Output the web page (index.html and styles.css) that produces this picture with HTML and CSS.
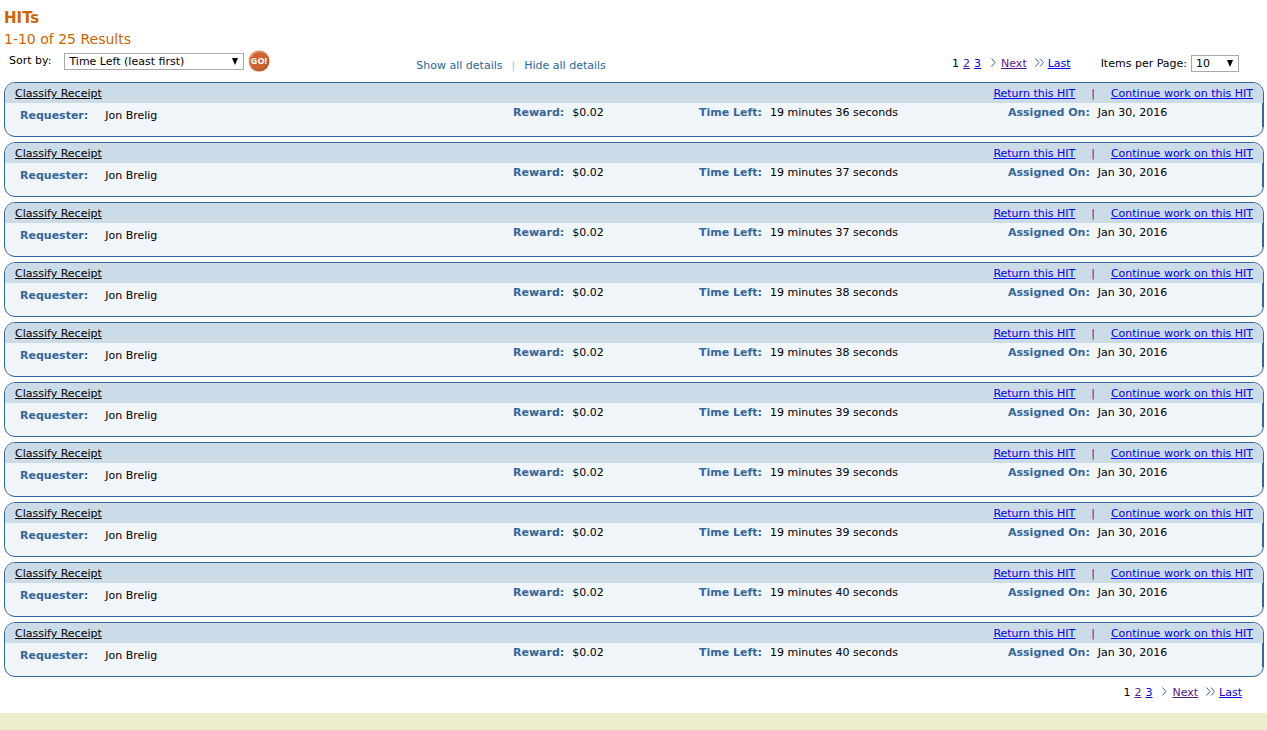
FILE: index.html
```
<!DOCTYPE html>
<html lang="en">
<head>
  <meta charset="utf-8">
  <title>HITs</title>
  <link rel="stylesheet" href="styles.css">
</head>
<body>
  <div class="content">
    <h1 class="title">HITs</h1>
    <h2 class="results">1-10 of 25 Results</h2>

    <div class="toolbar">
      <form class="sort">
        <label for="sort">Sort by:</label>
        <span class="select">
          <select id="sort" class="sort-select">
            <option>Time Left (least first)</option>
            <option>Time Left (most first)</option>
            <option>Reward (most first)</option>
          </select>
        </span>
        <button type="button" class="go" aria-label="GO!">
          <svg width="22" height="22" viewBox="0 0 22 22">
            <defs>
              <linearGradient id="rim" x1="0" y1="0" x2="1" y2="1">
                <stop offset="0" stop-color="#f0b080"/>
                <stop offset="0.5" stop-color="#d06c38"/>
                <stop offset="1" stop-color="#a04c1c"/>
              </linearGradient>
            </defs>
            <circle cx="11" cy="11" r="10.5" fill="url(#rim)"/>
            <circle cx="11" cy="11" r="8.5" fill="#cc6331"/>
            <text x="11" y="14" class="go-text">GO!</text>
          </svg>
        </button>
      </form>
      <div class="details">
        <a href="#">Show all details</a><span class="bar">|</span><a href="#">Hide all details</a>
      </div>
      <div class="paging">
        <div class="pager">
          <span>1</span> <a href="#" class="visited">2</a> <a href="#">3</a>
          <svg class="next" width="5" height="9" viewBox="0 0 5 9"><path d="M0.5 0.5L4 4.5L0.5 8.5"/></svg>
          <a href="#" class="visited">Next</a>
          <svg class="last" width="9" height="9" viewBox="0 0 9 9"><path d="M0.5 0.5L4 4.5L0.5 8.5M5 0.5L8.5 4.5L5 8.5"/></svg>
          <a href="#">Last</a>
        </div>
        <form class="per-page">
          <label for="per-page">Items per Page:</label>
          <span class="select">
            <select id="per-page" class="page-select">
              <option>10</option>
              <option>25</option>
            </select>
          </span>
        </form>
      </div>
    </div>

    <div class="hits">
      <div class="hit">
        <div class="hit-head">
          <a href="#" class="hit-title">Classify Receipt</a>
          <div><a href="#">Return this HIT</a><span class="divider">|</span><a href="#">Continue work on this HIT</a></div>
        </div>
        <dl class="hit-body">
          <div class="requester"><dt>Requester:</dt><dd>Jon Brelig</dd></div>
          <div><dt>Reward:</dt><dd>$0.02</dd></div>
          <div><dt>Time Left:</dt><dd>19 minutes 36 seconds</dd></div>
          <div><dt>Assigned On:</dt><dd>Jan 30, 2016</dd></div>
        </dl>
      </div>

      <div class="hit">
        <div class="hit-head">
          <a href="#" class="hit-title">Classify Receipt</a>
          <div><a href="#">Return this HIT</a><span class="divider">|</span><a href="#">Continue work on this HIT</a></div>
        </div>
        <dl class="hit-body">
          <div class="requester"><dt>Requester:</dt><dd>Jon Brelig</dd></div>
          <div><dt>Reward:</dt><dd>$0.02</dd></div>
          <div><dt>Time Left:</dt><dd>19 minutes 37 seconds</dd></div>
          <div><dt>Assigned On:</dt><dd>Jan 30, 2016</dd></div>
        </dl>
      </div>

      <div class="hit">
        <div class="hit-head">
          <a href="#" class="hit-title">Classify Receipt</a>
          <div><a href="#">Return this HIT</a><span class="divider">|</span><a href="#">Continue work on this HIT</a></div>
        </div>
        <dl class="hit-body">
          <div class="requester"><dt>Requester:</dt><dd>Jon Brelig</dd></div>
          <div><dt>Reward:</dt><dd>$0.02</dd></div>
          <div><dt>Time Left:</dt><dd>19 minutes 37 seconds</dd></div>
          <div><dt>Assigned On:</dt><dd>Jan 30, 2016</dd></div>
        </dl>
      </div>

      <div class="hit">
        <div class="hit-head">
          <a href="#" class="hit-title">Classify Receipt</a>
          <div><a href="#">Return this HIT</a><span class="divider">|</span><a href="#">Continue work on this HIT</a></div>
        </div>
        <dl class="hit-body">
          <div class="requester"><dt>Requester:</dt><dd>Jon Brelig</dd></div>
          <div><dt>Reward:</dt><dd>$0.02</dd></div>
          <div><dt>Time Left:</dt><dd>19 minutes 38 seconds</dd></div>
          <div><dt>Assigned On:</dt><dd>Jan 30, 2016</dd></div>
        </dl>
      </div>

      <div class="hit">
        <div class="hit-head">
          <a href="#" class="hit-title">Classify Receipt</a>
          <div><a href="#">Return this HIT</a><span class="divider">|</span><a href="#">Continue work on this HIT</a></div>
        </div>
        <dl class="hit-body">
          <div class="requester"><dt>Requester:</dt><dd>Jon Brelig</dd></div>
          <div><dt>Reward:</dt><dd>$0.02</dd></div>
          <div><dt>Time Left:</dt><dd>19 minutes 38 seconds</dd></div>
          <div><dt>Assigned On:</dt><dd>Jan 30, 2016</dd></div>
        </dl>
      </div>

      <div class="hit">
        <div class="hit-head">
          <a href="#" class="hit-title">Classify Receipt</a>
          <div><a href="#">Return this HIT</a><span class="divider">|</span><a href="#">Continue work on this HIT</a></div>
        </div>
        <dl class="hit-body">
          <div class="requester"><dt>Requester:</dt><dd>Jon Brelig</dd></div>
          <div><dt>Reward:</dt><dd>$0.02</dd></div>
          <div><dt>Time Left:</dt><dd>19 minutes 39 seconds</dd></div>
          <div><dt>Assigned On:</dt><dd>Jan 30, 2016</dd></div>
        </dl>
      </div>

      <div class="hit">
        <div class="hit-head">
          <a href="#" class="hit-title">Classify Receipt</a>
          <div><a href="#">Return this HIT</a><span class="divider">|</span><a href="#">Continue work on this HIT</a></div>
        </div>
        <dl class="hit-body">
          <div class="requester"><dt>Requester:</dt><dd>Jon Brelig</dd></div>
          <div><dt>Reward:</dt><dd>$0.02</dd></div>
          <div><dt>Time Left:</dt><dd>19 minutes 39 seconds</dd></div>
          <div><dt>Assigned On:</dt><dd>Jan 30, 2016</dd></div>
        </dl>
      </div>

      <div class="hit">
        <div class="hit-head">
          <a href="#" class="hit-title">Classify Receipt</a>
          <div><a href="#">Return this HIT</a><span class="divider">|</span><a href="#">Continue work on this HIT</a></div>
        </div>
        <dl class="hit-body">
          <div class="requester"><dt>Requester:</dt><dd>Jon Brelig</dd></div>
          <div><dt>Reward:</dt><dd>$0.02</dd></div>
          <div><dt>Time Left:</dt><dd>19 minutes 39 seconds</dd></div>
          <div><dt>Assigned On:</dt><dd>Jan 30, 2016</dd></div>
        </dl>
      </div>

      <div class="hit">
        <div class="hit-head">
          <a href="#" class="hit-title">Classify Receipt</a>
          <div><a href="#">Return this HIT</a><span class="divider">|</span><a href="#">Continue work on this HIT</a></div>
        </div>
        <dl class="hit-body">
          <div class="requester"><dt>Requester:</dt><dd>Jon Brelig</dd></div>
          <div><dt>Reward:</dt><dd>$0.02</dd></div>
          <div><dt>Time Left:</dt><dd>19 minutes 40 seconds</dd></div>
          <div><dt>Assigned On:</dt><dd>Jan 30, 2016</dd></div>
        </dl>
      </div>

      <div class="hit">
        <div class="hit-head">
          <a href="#" class="hit-title">Classify Receipt</a>
          <div><a href="#">Return this HIT</a><span class="divider">|</span><a href="#">Continue work on this HIT</a></div>
        </div>
        <dl class="hit-body">
          <div class="requester"><dt>Requester:</dt><dd>Jon Brelig</dd></div>
          <div><dt>Reward:</dt><dd>$0.02</dd></div>
          <div><dt>Time Left:</dt><dd>19 minutes 40 seconds</dd></div>
          <div><dt>Assigned On:</dt><dd>Jan 30, 2016</dd></div>
        </dl>
      </div>
    </div>

    <div class="pager pager-bottom">
      <span>1</span> <a href="#" class="visited">2</a> <a href="#">3</a>
      <svg class="next" width="5" height="9" viewBox="0 0 5 9"><path d="M0.5 0.5L4 4.5L0.5 8.5"/></svg>
      <a href="#" class="visited">Next</a>
      <svg class="last" width="9" height="9" viewBox="0 0 9 9"><path d="M0.5 0.5L4 4.5L0.5 8.5M5 0.5L8.5 4.5L5 8.5"/></svg>
      <a href="#">Last</a>
    </div>
  </div>
  <div class="footer"></div>
</body>
</html>
```
FILE: styles.css
```
body {
  display: flex;
  flex-direction: column;
  min-height: 100vh;
  margin: 0;
  background: #fff;
  color: #000;
  font-family: Verdana, "DejaVu Sans", sans-serif;
  font-size: 11px;
  line-height: 16px;
}

a {
  color: #00e;
}

a.visited {
  color: #551a8b;
}

.content {
  padding: 8px 3px 0 4px;
}

.title,
.results {
  margin: 0;
  color: #c60;
  font-size: 14px;
  line-height: 21px;
}

.title {
  font-size: 15px;
}

.results {
  font-weight: normal;
}

.toolbar {
  display: grid;
  grid-template-columns: 411fr 534fr auto;
  align-items: start;
  height: 32px;
  padding-right: 25px;
}

.sort,
.per-page,
.paging {
  display: flex;
  align-items: center;
}

.sort {
  padding-left: 5px;
}

.select {
  position: relative;
  display: flex;
}

.select::after {
  content: "";
  position: absolute;
  top: 5px;
  right: 6px;
  border: solid transparent;
  border-width: 7px 3px 0;
  border-top-color: #000;
  pointer-events: none;
}

select {
  appearance: none;
  height: 17px;
  margin: 0;
  padding: 0 4px;
  border: 1px solid #a9a9a9;
  border-radius: 0;
  background: #fff;
  color: #000;
  font-family: inherit;
  font-size: 11px;
  line-height: 15px;
}

.sort-select {
  width: 180px;
  margin-left: 13px;
}

.page-select {
  width: 48px;
  margin-left: 4px;
}

.go {
  width: 22px;
  height: 22px;
  margin-left: 4px;
  padding: 0;
  border: 0;
  background: none;
  cursor: pointer;
}

.go svg {
  display: block;
}

.go-text {
  fill: #fff;
  font-family: "Open Sans", sans-serif;
  font-size: 9px;
  font-weight: bold;
  text-anchor: middle;
}

.details {
  padding-top: 8px;
}

.details a {
  color: #1f6a99;
  text-decoration: none;
}

.bar {
  margin: 0 9px;
  color: #9cc3dc;
}

.paging {
  gap: 30px;
  padding-top: 5px;
}

.pager {
  display: flex;
  align-items: center;
  gap: 4px;
}

.pager svg {
  margin-bottom: 3px;
  fill: none;
  stroke: #336699;
}

.pager .next {
  margin-left: 6px;
  margin-right: 1px;
}

.pager .last {
  margin-left: 4px;
}

.hits {
  display: flex;
  flex-direction: column;
  gap: 5px;
}

.hit {
  position: relative;
  border: 1px solid #336699;
  border-radius: 11px;
  background: #f0f5fa;
}

/* thicker right edge below the header */
.hit::after {
  content: "";
  position: absolute;
  top: 20px;
  right: -1px;
  bottom: 9px;
  width: 2px;
  background: #336699;
}

.hit-head {
  display: flex;
  justify-content: space-between;
  height: 20px;
  padding: 0 10px;
  border-radius: 10px 10px 0 0;
  background: #ccdbe8;
  line-height: 22px;
}

.hit-title {
  color: #000;
}

.divider {
  margin: 0 16px;
  color: #551a8b;
}

.hit-body {
  display: grid;
  grid-template-columns: 493fr 186fr 309fr 255fr;
  height: 32px;
  margin: 0;
  padding: 2px 0 0 15px;
  box-sizing: content-box;
  height: 31px;
}

.hit-body div {
  display: flex;
  gap: 8px;
}

.hit-body .requester {
  gap: 17px;
  padding-top: 3px;
}

dt {
  color: #336699;
  font-weight: bold;
}

dd {
  margin: 0;
}

.pager-bottom {
  justify-content: flex-end;
  padding: 8px 22px 12px 0;
}

.footer {
  flex: 1;
  background: #eeeecc;
}
```
